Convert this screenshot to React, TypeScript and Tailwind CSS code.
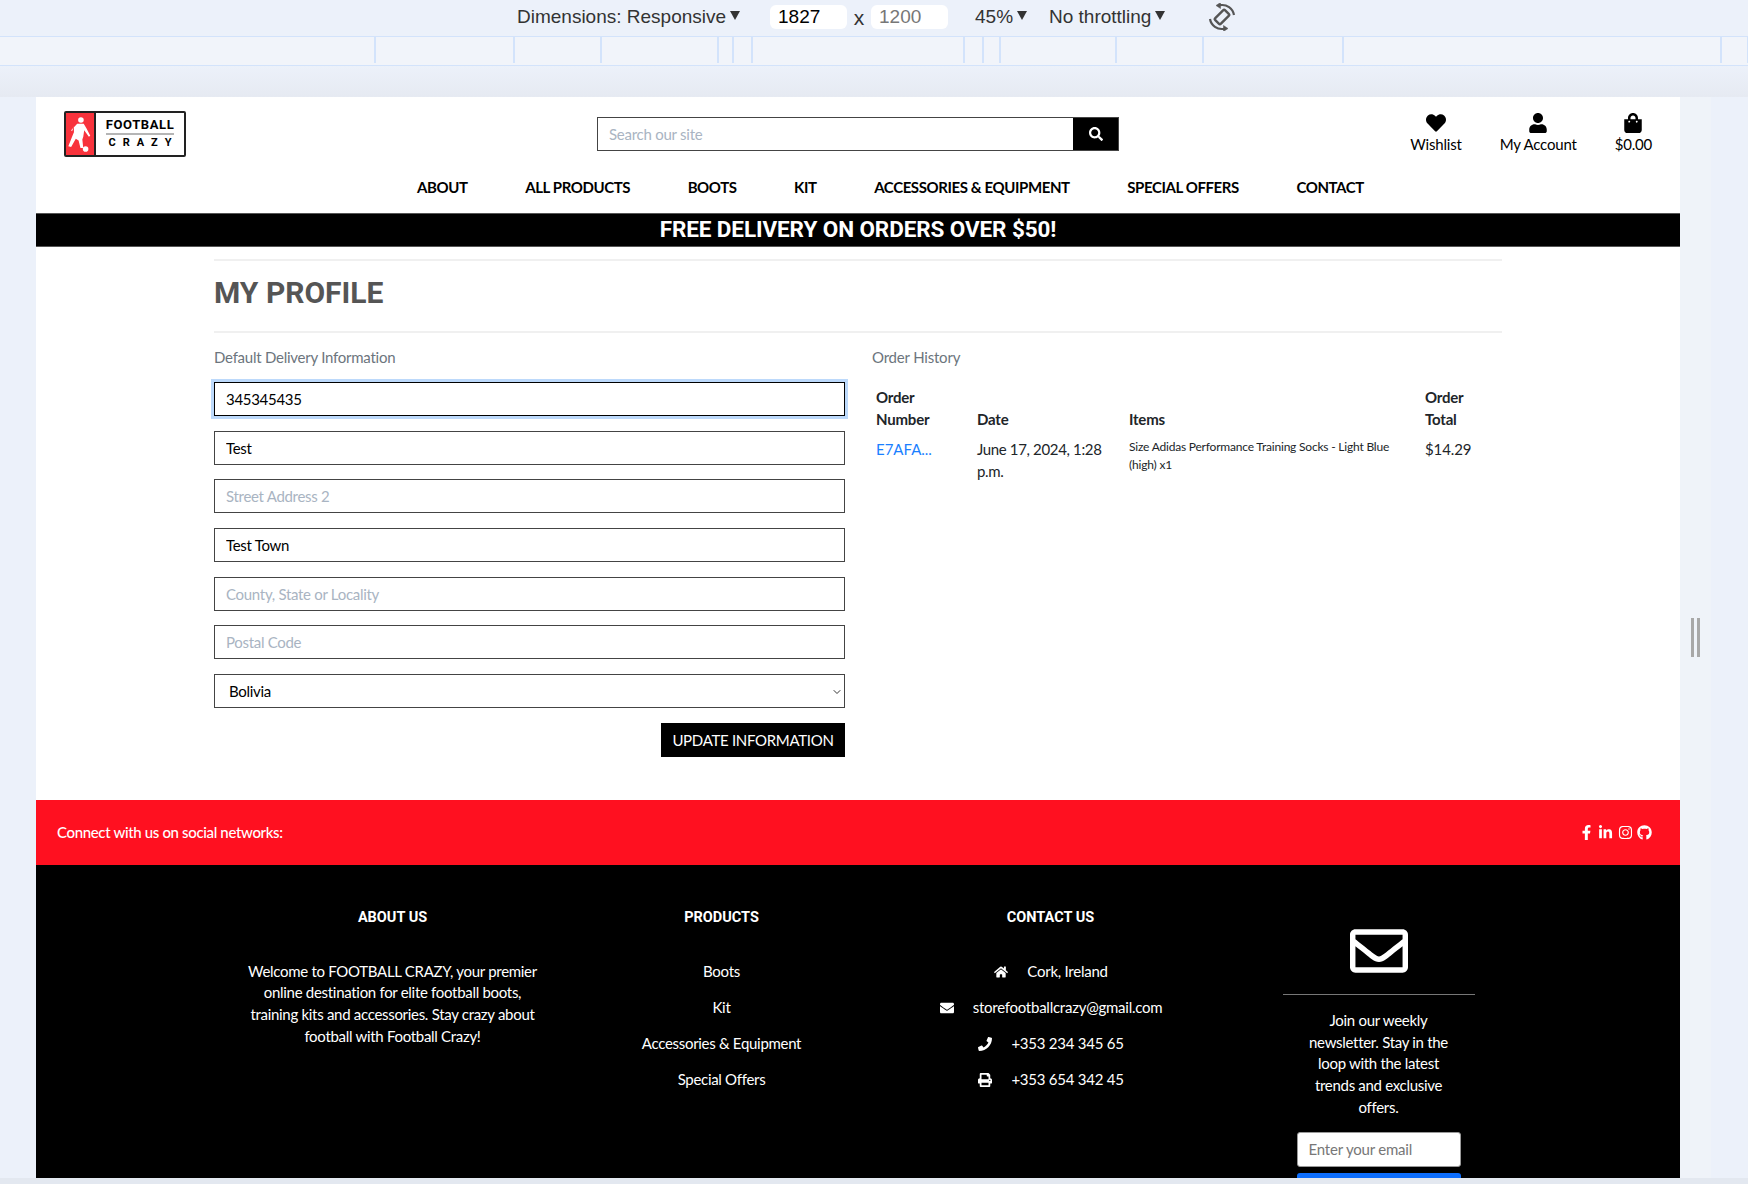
import { ChevronDown } from 'lucide-react';
import { FaEnvelope, FaFacebookF, FaGithub, FaHeart, FaHome, FaInstagram, FaLinkedinIn, FaPhone, FaPrint, FaRegEnvelope, FaSearch, FaShoppingBag, FaUser } from 'react-icons/fa';

const navLinks = ['ABOUT', 'ALL PRODUCTS', 'BOOTS', 'KIT', 'ACCESSORIES & EQUIPMENT', 'SPECIAL OFFERS', 'CONTACT'];
const productLinks = ['Boots', 'Kit', 'Accessories & Equipment', 'Special Offers'];

function Caret() {
  return <span className="ml-1 inline-block h-0 w-0 -translate-y-[3px] border-x-[5.5px] border-t-[9px] border-x-transparent border-t-[#333]" />;
}

function RotateIcon() {
  return (
    <svg viewBox="0 0 28 28" className="h-[28px] w-[28px] text-[#555]" fill="none" stroke="currentColor">
      <rect x="10" y="7" width="8" height="14" rx="1.500" strokeWidth="2.400" transform="rotate(45 14 14)" />
      <path d="M12 2.200A12 12 0 0 1 26 12" strokeWidth="2.200" />
      <path d="M16 25.800A12 12 0 0 1 2 16" strokeWidth="2.200" />
      <path d="M12.500 -0.500L8 2.500l4.500 3z" fill="currentColor" strokeWidth="0.500" />
      <path d="M15.500 28.500L20 25.500l-4.500-3z" fill="currentColor" strokeWidth="0.500" />
    </svg>
  );
}

function Toolbar() {
  return (
    <div className="flex h-9 items-center bg-[#ecf1fa] pb-[2px] pl-[517px] font-['Liberation_Sans',sans-serif] text-[19px] text-[#333]">
      <span className="w-[253px]">Dimensions: Responsive<Caret /></span>
      <span className="flex h-6 w-[77px] items-center rounded-md bg-white pl-2 text-black">1827</span>
      <span className="w-6 translate-y-[1px] text-center text-[21px]">x</span>
      <span className="flex h-6 w-[77px] items-center rounded-md bg-white pl-2 text-[#777]">1200</span>
      <span className="ml-[27px] w-[74px]">45%<Caret /></span>
      <span className="w-[159px]">No throttling<Caret /></span>
      <RotateIcon />
    </div>
  );
}

function Ruler() {
  return (
    <div className="grid h-[30px] grid-cols-[376px_139px_87px_117px_15px_19px_212px_19px_17px_116px_87px_140px_378px_27px] border-y border-[#d3e3fb] bg-[#f1f4fa]">
      {Array.from({ length: 14 }).map((_, i) => (
        <div key={i} className="mb-[2px] border-r-2 border-[#d3e3fb]" />
      ))}
    </div>
  );
}

function Logo() {
  return (
    <div className="flex h-[46px] w-[122px] overflow-hidden rounded-[2px] border-2 border-[#222] bg-white">
      <div className="flex w-[30px] items-center justify-center border-r-2 border-[#222] bg-[#f8333c]">
        <svg viewBox="0 0 30 44" className="h-[42px] w-[28px]" fill="#fff">
          <circle cx="16" cy="7" r="3" />
          <path d="M12 11h7l3 5 4 8-1.500 1-5-7-1 7-1 3 1 9h-3l-2-8-3-2-5 9-3-1 4-10 2-5 0-6-2 5-1-1z" />
          <circle cx="21" cy="38" r="3" />
        </svg>
      </div>
      <div className="flex flex-1 flex-col items-center justify-center font-['Roboto',sans-serif] text-black">
        <span className="border-b-2 border-[#b5b5b5] pb-[1px] text-[13px] leading-[14px] font-bold tracking-[0.6px]">FOOTBALL</span>
        <span className="pt-[1px] pl-[7px] text-[11px] leading-[14px] font-bold tracking-[7px]">CRAZY</span>
      </div>
    </div>
  );
}

function Header() {
  return (
    <header className="h-[116px] px-7 pt-[14px]">
      <div className="grid grid-cols-[1fr_522px_1fr] items-start">
        <Logo />
        <div className="mt-[6px] flex h-[34px] border border-[#444]">
          <input placeholder="Search our site" className="min-w-0 flex-1 px-[11px] text-[15px] tracking-[-0.25px] outline-none placeholder:text-[#a9b4c2]" />
          <button className="flex w-[45px] items-center justify-center bg-black text-[14px] text-white"><FaSearch /></button>
        </div>
        <div className="mt-[2px] flex justify-end gap-[38px] text-[15px] tracking-[-0.2px] text-black">
          <div className="flex flex-col items-center"><FaHeart className="text-[20px]" /><span>Wishlist</span></div>
          <div className="flex flex-col items-center"><FaUser className="text-[20px]" /><span>My Account</span></div>
          <div className="flex flex-col items-center"><FaShoppingBag className="text-[20px]" /><span>$0.00</span></div>
        </div>
      </div>
      <nav className="mt-[19px] flex justify-center gap-[57.500px] pl-[65px] text-[15px] font-bold tracking-[-0.4px] text-black">
        {navLinks.map(link => <a key={link}>{link}</a>)}
      </nav>
    </header>
  );
}

function Field({ value, placeholder, focused }: { value?: string; placeholder?: string; focused?: boolean }) {
  return (
    <input
      defaultValue={value}
      placeholder={placeholder}
      className={`h-[34px] w-full border px-[11px] text-[15px] tracking-[-0.3px] text-black outline-none placeholder:text-[#a9b4c2] ${focused ? 'border-black ring-[3px] ring-[#bcd9fb]' : 'border-[#444]'}`}
    />
  );
}

function ProfileForm() {
  return (
    <div className="w-[631px]">
      <p className="mb-[14px] text-[15px] leading-[22px] tracking-[-0.25px] text-[#6c757d]">Default Delivery Information</p>
      <div className="flex flex-col gap-[14.700px]">
        <Field value="345345435" focused />
        <Field value="Test" />
        <Field placeholder="Street Address 2" />
        <Field value="Test Town" />
        <Field placeholder="County, State or Locality" />
        <Field placeholder="Postal Code" />
        <div className="relative">
          <select defaultValue="Bolivia" className="h-[34px] w-full appearance-none border border-[#444] bg-white pl-[14px] text-[15px] tracking-[-0.3px] text-black outline-none">
            <option>Bolivia</option>
          </select>
          <ChevronDown className="absolute top-[12px] right-[2px] h-[12px] w-[12px] text-[#333]" />
        </div>
      </div>
      <div className="mt-[15px] flex justify-end">
        <button className="h-[34px] w-[184px] bg-black text-[15px] tracking-[-0.3px] text-white">UPDATE INFORMATION</button>
      </div>
    </div>
  );
}

function OrderHistory() {
  return (
    <div className="w-[630px]">
      <p className="mb-[15px] text-[15px] leading-[22px] tracking-[-0.2px] text-[#6c757d]">Order History</p>
      <table className="w-full table-fixed text-left text-[15px] leading-[22px] text-[#212529]">
        <thead>
          <tr className="align-bottom font-bold">
            <th className="w-[101px] px-1 py-[3px] tracking-[-0.2px]">Order Number</th>
            <th className="w-[152px] px-1 py-[3px] tracking-[-0.2px]">Date</th>
            <th className="px-1 py-[3px] tracking-[-0.2px]">Items</th>
            <th className="w-[81px] px-1 py-[3px] tracking-[-0.2px]">Order<br />Total</th>
          </tr>
        </thead>
        <tbody>
          <tr className="align-top">
            <td className="px-1 py-[5px] text-[#1a7fff]">E7AFA...</td>
            <td className="px-1 py-[5px] tracking-[-0.35px]">June 17, 2024, 1:28 p.m.</td>
            <td className="px-1 py-[5px] text-[12px] leading-[18px] tracking-[-0.2px]">Size Adidas Performance Training Socks - Light Blue (high) x1</td>
            <td className="px-1 py-[5px] tracking-[-0.1px]">$14.29</td>
          </tr>
        </tbody>
      </table>
    </div>
  );
}

function ContactRow({ icon, text }: { icon: React.ReactNode; text: string }) {
  return (
    <div className="flex items-center justify-center gap-[18px] tracking-[-0.25px]">
      <span className="flex w-[16px] justify-center text-[14px]">{icon}</span>
      <span>{text}</span>
    </div>
  );
}

function Footer() {
  return (
    <footer className="text-white">
      <div className="flex h-[65px] items-center justify-between bg-[#ff1020] pr-7 pl-[21px] text-[15px] font-medium tracking-[-0.35px]">
        <span>Connect with us on social networks:</span>
        <div className="flex items-center gap-[4.500px] text-[15px]">
          <FaFacebookF />
          <FaLinkedinIn />
          <FaInstagram />
          <FaGithub />
        </div>
      </div>
      <div className="h-[313px] overflow-hidden bg-black pl-[192px]">
        <div className="grid w-[1316px] grid-cols-4 text-center text-[15px] leading-[21.700px] tracking-[-0.3px]">
          <div className="pt-[42px]">
            <h6 className="font-['Roboto',sans-serif] text-[14.500px] font-bold tracking-normal">ABOUT US</h6>
            <p className="mx-auto mt-[32px] w-[300px]">Welcome to FOOTBALL CRAZY, your premier online destination for elite football boots, training kits and accessories. Stay crazy about football with Football Crazy!</p>
          </div>
          <div className="pt-[42px]">
            <h6 className="font-['Roboto',sans-serif] text-[14.500px] font-bold tracking-normal">PRODUCTS</h6>
            <div className="mt-[32px] flex flex-col gap-[14.300px]">
              {productLinks.map(link => <a key={link}>{link}</a>)}
            </div>
          </div>
          <div className="pt-[42px]">
            <h6 className="font-['Roboto',sans-serif] text-[14.500px] font-bold tracking-normal">CONTACT US</h6>
            <div className="mt-[32px] flex flex-col gap-[14.300px]">
              <ContactRow icon={<FaHome />} text="Cork, Ireland" />
              <ContactRow icon={<FaEnvelope />} text="storefootballcrazy@gmail.com" />
              <ContactRow icon={<FaPhone />} text="+353 234 345 65" />
              <ContactRow icon={<FaPrint />} text="+353 654 342 45" />
            </div>
          </div>
          <div className="flex flex-col items-center pt-[57px] pr-[2px]">
            <FaRegEnvelope className="h-[58px] w-[58px]" />
            <div className="mt-[14px] w-[192px] border-t border-[#777]" />
            <p className="mt-[15px] w-[150px]">Join our weekly newsletter. Stay in the loop with the latest trends and exclusive offers.</p>
            <input placeholder="Enter your email" className="mt-[13px] h-[35px] w-[164px] shrink-0 rounded-[3px] border border-[#999] bg-white px-[11px] text-[15px] tracking-[-0.2px] text-black outline-none placeholder:text-[#777]" />
            <button className="mt-[6px] h-[40px] w-[164px] shrink-0 rounded-[3px] bg-[#0d6efd]" />
          </div>
        </div>
      </div>
    </footer>
  );
}

export default function App() {
  return (
    <div className="h-[1184px] w-[1748px] overflow-hidden bg-[#ecf1fa] font-['Lato',sans-serif]">
      <Toolbar />
      <Ruler />
      <div className="h-[31px] bg-gradient-to-b from-[#ecf1fa] to-[#e6eaf2]" />
      <div className="flex h-[1081px]">
        <div className="ml-[36px] w-[1644px] bg-white">
          <Header />
          <div className="flex h-[34px] items-center justify-center border-y border-[#555] bg-black font-['Roboto',sans-serif] text-[22.500px] font-bold tracking-[-0.1px] text-white">
            FREE DELIVERY ON ORDERS OVER $50!
          </div>
          <main className="h-[553px] px-[178px] pt-[12px]">
            <div className="border-y-2 border-[#f0f0f0] pt-[9px] pb-[15px]">
              <h1 className="font-['Roboto',sans-serif] text-[30px] leading-[46px] font-bold text-[#555]">MY PROFILE</h1>
            </div>
            <div className="mt-[13px] flex justify-between">
              <ProfileForm />
              <OrderHistory />
            </div>
          </main>
          <Footer />
        </div>
        <div className="flex w-[31px] items-center justify-center gap-[3px] bg-[#eff3f9]">
          <span className="h-[39px] w-[3px] bg-[#a8a8a8]" />
          <span className="h-[39px] w-[3px] bg-[#a8a8a8]" />
        </div>
      </div>
      <div className="h-[6px] bg-[#e3e8f0]" />
    </div>
  );
}
